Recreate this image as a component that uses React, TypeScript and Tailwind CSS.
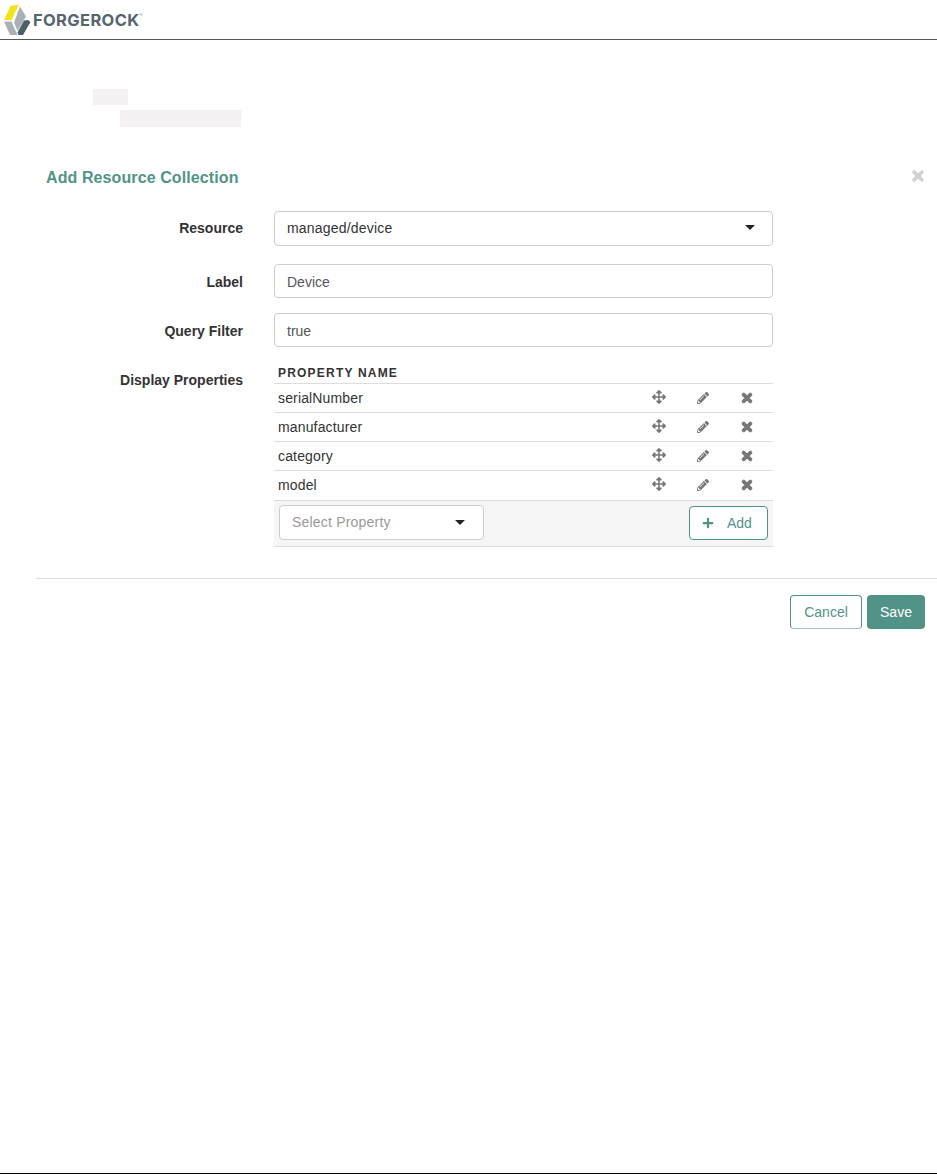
import { FaArrowsAlt, FaPencilAlt, FaPlus, FaTimes } from "react-icons/fa";

const properties = ["serialNumber", "manufacturer", "category", "model"];

const Logo = () => (
  <div className="flex items-center">
    <svg width="29" height="36" viewBox="0 0 29 36" className="ml-[2px]">
      <polygon points="2,18 8.5,4 17,2.5 9.5,18" fill="#f3e21a" />
      <polygon points="18,4.5 24,14.5 15.5,29 12,20.5" fill="#a9b1b6" />
      <polygon points="2,19.5 9.5,19.5 15.5,33 8,33" fill="#a9b1b6" />
      <polygon points="22,18.5 26,18 28.5,20 21,33 16.5,33 15.5,30.5" fill="#4d5f6b" />
    </svg>
    <span className="ml-[2px] mt-[2px] font-['Inter',sans-serif] text-[16.5px] leading-none font-bold tracking-[0.35px] text-[#56646e]">
      FORGEROCK
    </span>
    <span className="mb-[10px] text-[4px] leading-none text-[#56646e]">®</span>
  </div>
);

const Caret = () => <div className="h-0 w-0 border-x-[5px] border-t-[5px] border-x-transparent border-t-[#222]" />;

const FieldRow = ({
  label,
  children,
  className,
  labelClass,
}: {
  label: string;
  children: React.ReactNode;
  className: string;
  labelClass?: string;
}) => (
  <div className={`flex ${className}`}>
    <label className={`w-[243px] text-right text-[14px] leading-[20px] font-bold text-[#333] ${labelClass}`}>{label}</label>
    <div className="ml-[31px] w-[499px]">{children}</div>
  </div>
);

export default function App() {
  return (
    <div className="flex h-[1174px] flex-col bg-white font-['Liberation_Sans',Arial,sans-serif] text-[#333]">
      <header className="flex h-[40px] items-center border-b border-[#555]">
        <Logo />
      </header>

      <div className="ml-[93px] mt-[49px] h-[16px] w-[35px] bg-[#f5f0f2]" />
      <div className="ml-[120px] mt-[5px] h-[17px] w-[121px] bg-[#f5f0f2]" />

      <div className="mt-[40px] flex h-[20px] items-center justify-between pl-[46px] pr-[11px]">
        <h2 className="pt-[2px] text-[16px] leading-[20px] font-bold tracking-[0.1px] text-[#519387]">Add Resource Collection</h2>
        <FaTimes className="mb-[2px] h-[16px] w-[16px] text-[#d2d2d2]" stroke="currentColor" strokeWidth={30} />
      </div>

      <FieldRow label="Resource" className="mt-[24px] items-center" labelClass="pb-[2px]">
        <div className="flex h-[35px] items-center justify-between rounded border border-[#ccc] pl-[12px] pr-[17px] text-[14px]">
          <span className="tracking-[0.2px]">managed/device</span>
          <div className="mb-[3px]">
            <Caret />
          </div>
        </div>
      </FieldRow>

      <FieldRow label="Label" className="mt-[18px] items-center" labelClass="pt-[2px]">
        <div className="flex h-[34px] items-center rounded border border-[#ccc] px-[12px] pt-[2px] text-[14px] text-[#555]">Device</div>
      </FieldRow>

      <FieldRow label="Query Filter" className="mt-[15px] items-center" labelClass="pt-[2px]">
        <div className="flex h-[34px] items-center rounded border border-[#ccc] px-[12px] pt-[2px] text-[14px] text-[#555]">true</div>
      </FieldRow>

      <FieldRow label="Display Properties" className="mt-[19px]" labelClass="pt-[4px]">
        <div className="text-[14px] leading-[20px]">
          <div className="h-[17px] pl-[4px] text-[12px] leading-[14px] font-bold tracking-[1.2px] text-[#333]">PROPERTY NAME</div>
          {properties.map((name) => (
            <div key={name} className="flex h-[29px] items-center border-t border-[#ddd] pl-[4px] text-[#333]">
              <span className="w-[374px] tracking-[0.15px]">{name}</span>
              <FaArrowsAlt className="mb-[2px] h-[14px] w-[14px] text-[#777]" />
              <FaPencilAlt className="ml-[31px] mb-[1px] h-[12px] w-[12px] text-[#777]" />
              <FaTimes className="ml-[31px] h-[14px] w-[14px] text-[#777]" stroke="currentColor" strokeWidth={40} />
            </div>
          ))}
          <div className="mt-[1px] flex h-[47px] items-start justify-between border-y border-[#ddd] bg-[#f5f5f5] px-[5px] pt-[4px]">
            <div className="flex h-[35px] w-[205px] items-center justify-between rounded border border-[#ccc] bg-white pb-[1px] pl-[12px] pr-[18px] text-[#999]">
              <span className="tracking-[0.2px]">Select Property</span>
              <Caret />
            </div>
            <button className="mt-[1px] flex h-[34px] w-[79px] items-center rounded border border-[#519387] bg-white pl-[12px] text-[#519387]">
              <FaPlus className="h-[12px] w-[12px]" />
              <span className="ml-[13px]">Add</span>
            </button>
          </div>
        </div>
      </FieldRow>

      <div className="ml-[36px] mt-[31px] border-t border-[#ddd]" />

      <div className="mr-[12px] mt-[16px] flex justify-end gap-[5px] text-[14px]">
        <button className="h-[34px] w-[72px] rounded border border-[#519387] border-b-[#9cc4bb] bg-white text-[#519387]">Cancel</button>
        <button className="h-[34px] w-[58px] rounded bg-[#519387] text-white">Save</button>
      </div>

      <div className="mt-auto border-b border-black" />
    </div>
  );
}
